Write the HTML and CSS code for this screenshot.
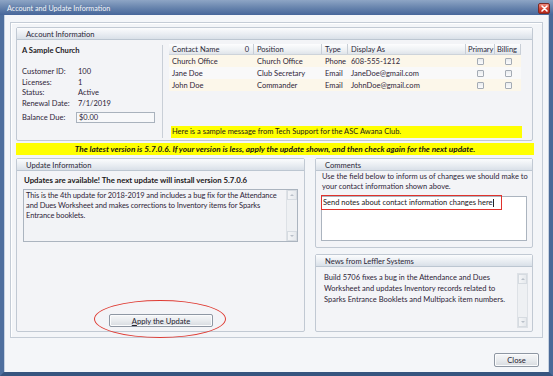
FILE: index.html
```html
<!DOCTYPE html>
<html>
<head>
<meta charset="utf-8">
<link rel="stylesheet" href="styles.css">
</head>
<body>
<div class="win">
  <div class="titlebar">
    <span class="title">Account and Update Information</span>
    <span class="close-x">
      <svg width="9" height="9" viewBox="0 0 9 9"><path d="M2 2 L7 7 M7 2 L2 7" stroke="#fff" stroke-width="1.6" stroke-linecap="round"/></svg>
    </span>
  </div>
  <div class="client">
    <div class="panel">
      <div class="group acct">
        <div class="ghead">Account Information</div>
        <div class="gbody acct-body">
          <div class="acct-left">
            <div class="org">A Sample Church</div>
            <div class="info">
              <span>Customer ID:</span><span>100</span>
              <span>Licenses:</span><span>1</span>
              <span>Status:</span><span>Active</span>
              <span>Renewal Date:</span><span>7/1/2019</span>
            </div>
            <div class="bal">
              <span class="bal-l">Balance Due:</span><span class="bal-box">$0.00</span>
            </div>
          </div>
          <div class="divider"></div>
          <div class="acct-right">
            <div class="table">
              <div class="trow thead">
                <div class="c c1">Contact Name<span class="zero">0</span></div>
                <div class="c c2">Position</div>
                <div class="c c3">Type</div>
                <div class="c c4">Display As</div>
                <div class="c c5">Primary</div>
                <div class="c c6">Billing</div>
              </div>
              <div class="trow odd">
                <div class="c c1">Church Office</div>
                <div class="c c2">Church Office</div>
                <div class="c c3">Phone</div>
                <div class="c c4">608-555-1212</div>
                <div class="c c5"><span class="cb"></span></div>
                <div class="c c6"><span class="cb"></span></div>
              </div>
              <div class="trow even">
                <div class="c c1">Jane Doe</div>
                <div class="c c2">Club Secretary</div>
                <div class="c c3">Email</div>
                <div class="c c4">JaneDoe@gmail.com</div>
                <div class="c c5"><span class="cb"></span></div>
                <div class="c c6"><span class="cb"></span></div>
              </div>
              <div class="trow odd">
                <div class="c c1">John Doe</div>
                <div class="c c2">Commander</div>
                <div class="c c3">Email</div>
                <div class="c c4">JohnDoe@gmail.com</div>
                <div class="c c5"><span class="cb"></span></div>
                <div class="c c6"><span class="cb"></span></div>
              </div>
            </div>
            <div class="msg">Here is a sample message from Tech Support for the ASC Awana Club.</div>
          </div>
        </div>
      </div>
      <div class="banner">The latest version is 5.7.0.6. If your version is less, apply the update shown, and then check again for the next update.</div>
      <div class="lower">
        <div class="group upd">
          <div class="ghead">Update Information</div>
          <div class="gbody upd-body">
            <div class="upd-title">Updates are available! The next update will install version 5.7.0.6</div>
            <div class="ta ta-upd">
              <div class="ta-text">This is the 4th update for 2018-2019 and includes a bug fix for the Attendance and Dues Worksheet and makes corrections to Inventory items for Sparks Entrance booklets.</div>
              <div class="sbar"><span class="sb-up"></span><span class="sb-dn"></span></div>
            </div>
            <div class="btn-wrap">
              <div class="btn apply"><u>A</u>pply the Update</div>
              <div class="ellipse"></div>
            </div>
          </div>
        </div>
        <div class="rcol">
          <div class="group cmt">
            <div class="ghead">Comments</div>
            <div class="gbody cmt-body">
              <div class="cmt-info">Use the field below to inform us of changes we should make to your contact information shown above.</div>
              <div class="ta ta-cmt">
                <div class="cmt-line">Send notes about contact information changes here<span class="caret"></span></div>
                <div class="redbox"></div>
              </div>
            </div>
          </div>
          <div class="group news">
            <div class="ghead">News from Leffler Systems</div>
            <div class="gbody news-body">
              <div class="news-text">Build 5706 fixes a bug in the Attendance and Dues Worksheet and updates Inventory records related to Sparks Entrance Booklets and Multipack item numbers.</div>
              <div class="sbar news-sb"><span class="sb-up"></span><span class="sb-dn"></span></div>
            </div>
          </div>
        </div>
      </div>
    </div>
    <div class="footer">
      <div class="btn close">Close</div>
    </div>
  </div>
</div>
</body>
</html>
```
FILE: styles.css
```css
* { box-sizing: border-box; }
html, body { margin: 0; padding: 0; }
body {
  width: 553px; height: 376px; overflow: hidden;
  font-family: Lato, "Open Sans", sans-serif;
  font-size: 7.5px;
  color: #2e2438;
  background: #4a6a98;
}
.win { width: 553px; height: 376px; display: flex; flex-direction: column; }
.titlebar {
  height: 15px; flex: none;
  background: linear-gradient(#8ea5c5 0%, #6c88b0 45%, #46669a 100%);
  display: flex; align-items: center; justify-content: space-between;
  padding: 0 3px 0 7px;
}
.title { color: #f3f6fa; font-size: 7.2px; text-shadow: 0 0 2px #5a76a0; padding-top: 1px; }
.close-x {
  width: 12px; height: 11px; margin-top: 2px;
  background: linear-gradient(#ee8a7e, #d2402f 55%, #b9281a);
  border: 1px solid #7a2a26; border-radius: 2px;
  display: flex; align-items: center; justify-content: center;
}
.client {
  flex: 1; display: flex; flex-direction: column;
  background: #f4f6f9;
  border-left: 4px solid #4e6f9e;
  border-right: 4px solid #4a6a98;
  border-bottom: 4px solid #37557f;
  padding: 7px 6px 0 6px;
  box-shadow: inset 1px 0 0 #c6d2e2, inset -1px 0 0 #c6d2e2;
}
.panel {
  height: 316px; width: 533px;
  border: 1px solid #c4ccd6;
  box-shadow: inset 1px 1px 0 #ffffff;
  background: #f3f5f8;
  padding: 4px 9px 7px 5px;
  display: flex; flex-direction: column;
}
.group {
  border: 1px solid #c1c9d3; border-radius: 2px;
  background: #f3f4f7;
  display: flex; flex-direction: column;
}
.ghead {
  height: 12px; flex: none;
  background: linear-gradient(#fbfcfd, #e9edf2 55%, #d9e0e8);
  border-bottom: 1px solid #bcc6d1;
  padding-left: 9px;
  font-size: 7.6px; line-height: 12px; color: #2b2738;
}
.gbody { flex: 1; }
/* Account */
.acct { height: 114px; flex: none; }
.acct-body { display: flex; padding: 4px 10px 4px 0; }
.acct-left { width: 146px; padding: 1px 0 0 5px; }
.org { font-weight: 700; line-height: 10px; color: #1d1a24; font-size: 7.6px; }
.info {
  margin-top: 12px;
  display: grid; grid-template-columns: 56px auto;
  grid-auto-rows: 10.5px; line-height: 10.5px;
}
.bal { display: flex; align-items: center; margin-top: 2px; height: 12px; }
.bal-l { width: 54px; }
.bal-box {
  width: 79px; height: 11px; border: 1px solid #a9b2bd; background: #f7f8fa;
  padding-left: 2px; line-height: 9px;
}
.divider { width: 1px; background: #c9cfd7; margin: 1px 0 0 0; height: 93px; }
.acct-right { flex: 1; padding-left: 6px; display: flex; flex-direction: column; }
.table { width: 352px; }
.trow { display: flex; height: 12px; align-items: center; }
.thead {
  height: 11px;
  background: linear-gradient(#fdfdfe, #eef1f4 60%, #dfe4ea);
  border-bottom: 1px solid #cdd3da;
}
.c { height: 100%; display: flex; align-items: center; padding-left: 3px; white-space: nowrap; }
.thead .c { border-right: 1px solid #c8ced6; color: #2c2a3a; }
.c1 { width: 85px; }
.c2 { width: 68px; }
.c3 { width: 26px; }
.c4 { width: 118px; }
.c5 { width: 29px; justify-content: center; padding-left: 0; }
.c6 { width: 26px; justify-content: center; padding-left: 0; }
.thead .c5, .thead .c6 { justify-content: flex-start; padding-left: 2px; }
.zero { margin-left: auto; padding-right: 4px; }
.odd { background: #fcf7ea; }
.even { background: #f9f9f9; }
.cb {
  width: 7px; height: 7px; border: 1px solid #a4abb4; border-radius: 1px;
  background: linear-gradient(#e9ecef, #fbfbfc);
}
.msg {
  margin-top: auto; margin-left: 2px; width: 351px;
  height: 12px; background: #ffff00; line-height: 12px; padding-left: 1px; color: #1e1a16;
}
/* Banner */
.banner {
  margin-top: 2px; height: 12px; flex: none; width: 518px;
  background: #ffff00; text-align: center; line-height: 12px;
  font-weight: 700; font-style: italic; color: #1a1712; font-size: 8.2px;
}
.lower { margin-top: 3px; flex: 1; display: flex; gap: 10px; }
.upd { width: 289px; }
.upd-body { display: flex; flex-direction: column; padding: 4px 6px 4px 6px; }
.upd-title { font-weight: 700; line-height: 10px; color: #1b1820; padding-left: 1px; font-size: 7.8px; }
.ta {
  position: relative; border: 1px solid #abb4bf; margin-top: 4px;
}
.ta-upd { height: 53px; background: #f2f3f6; display: flex; }
.ta-text { flex: 1; padding: 1px 1px 0 2px; line-height: 10px; letter-spacing: -0.1px; }
.sbar {
  width: 11px; background: #eef0f3; border-left: 1px solid #dde1e6;
  display: flex; flex-direction: column; justify-content: space-between;
}
.sb-up, .sb-dn {
  height: 10px; display: block; position: relative;
  background: linear-gradient(90deg, #f4f5f7, #e6e9ed);
  border: 1px solid #d6dbe1;
}
.sb-up::after, .sb-dn::after {
  content: ""; position: absolute; left: 2px; top: 3px;
  border-left: 2.5px solid transparent; border-right: 2.5px solid transparent;
}
.sb-up::after { border-bottom: 2.5px solid #b9c0c9; }
.sb-dn::after { border-top: 2.5px solid #b9c0c9; }
.btn-wrap { margin-top: auto; align-self: center; position: relative; margin-left: 1px; }
.btn {
  border: 1px solid #8e97a3; border-radius: 2px;
  background: linear-gradient(#f6f7f8, #e9ecef 50%, #d7dbe0);
  display: flex; align-items: center; justify-content: center;
  color: #25212d; box-shadow: inset 0 0 0 1px #fbfcfd;
}
.apply { width: 104px; height: 13px; font-size: 7.6px; }
.ellipse {
  position: absolute; left: -15px; top: -14px; width: 132px; height: 38px;
  border: 1.5px solid #df3b33; border-radius: 50%;
}
.rcol { flex: 1; display: flex; flex-direction: column; gap: 6px; }
.cmt { height: 90px; flex: none; }
.cmt-body { padding: 1px 5px 6px 5px; display: flex; flex-direction: column; }
.cmt-info { line-height: 10px; padding-left: 1px; margin-right: -4px; }
.ta-cmt { flex: 1; background: #ffffff; }
.cmt-line { padding: 0 0 0 1px; line-height: 11px; color: #1b1820; display: flex; align-items: center; }
.caret { width: 1px; height: 8px; background: #222; margin-left: 0.5px; }
.redbox {
  position: absolute; left: -1px; top: -2px; width: 181px; height: 15px;
  border: 1.5px solid #e0322c;
}
.news { flex: 1; }
.news-body { display: flex; padding: 5px 4px 3px 8px; }
.news-text { flex: 1; line-height: 11px; padding-right: 6px; margin-top: -0.5px; }
.news-sb { height: 55px; margin-top: 1px; border: 1px solid #dde1e6; }
/* Footer */
.footer { display: flex; justify-content: flex-end; padding: 15px 4px 0 0; }
.close { width: 45px; height: 14px; font-size: 7.6px; }
```
